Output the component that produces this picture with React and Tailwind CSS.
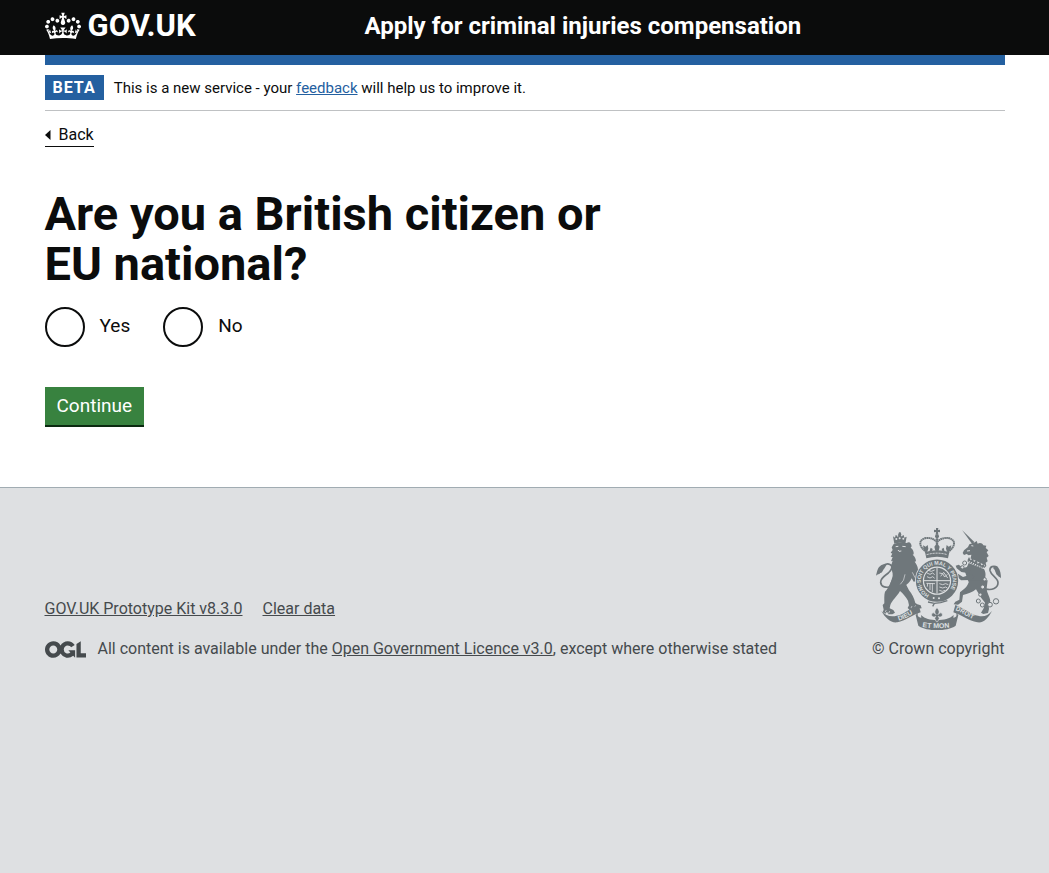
import React from "react";

function Crown() {
  return (
    <svg aria-hidden="true" viewBox="0 0 132 97" className="h-8 w-9" fill="currentColor">
      <path
        fillRule="evenodd"
        d="M25 30.2c3.5 1.5 7.7-.2 9.1-3.7 1.5-3.6-.2-7.8-3.9-9.2-3.6-1.4-7.6.3-9.1 3.9-1.4 3.5.3 7.5 3.9 9zM9 39.5c3.6 1.5 7.8-.2 9.2-3.7 1.5-3.6-.2-7.8-3.9-9.1-3.6-1.5-7.6.2-9.1 3.8-1.4 3.5.3 7.5 3.8 9zM4.4 57.2c3.5 1.5 7.7-.2 9.1-3.8 1.5-3.6-.2-7.7-3.9-9.1-3.5-1.5-7.6.3-9.1 3.8-1.4 3.5.3 7.6 3.9 9.1zm38.3-21.4c3.5 1.5 7.7-.2 9.1-3.8 1.5-3.6-.2-7.7-3.9-9.1-3.6-1.5-7.6.3-9.1 3.8-1.3 3.6.4 7.7 3.9 9.1zm64.4-5.6c-3.6 1.5-7.8-.2-9.1-3.7-1.5-3.6.2-7.8 3.8-9.2 3.6-1.4 7.7.3 9.2 3.9 1.3 3.5-.4 7.5-3.9 9zm15.9 9.3c-3.6 1.5-7.7-.2-9.1-3.7-1.5-3.6.2-7.8 3.7-9.1 3.6-1.5 7.7.2 9.2 3.8 1.5 3.5-.3 7.5-3.8 9zm4.7 17.7c-3.6 1.5-7.8-.2-9.2-3.8-1.5-3.6.2-7.7 3.9-9.1 3.6-1.5 7.7.3 9.2 3.8 1.3 3.5-.4 7.6-3.9 9.1zM89.3 35.8c-3.6 1.5-7.8-.2-9.2-3.8-1.4-3.6.2-7.7 3.9-9.1 3.6-1.5 7.7.3 9.2 3.8 1.4 3.6-.3 7.7-3.9 9.1zM69.7 17.7l8.9 4.7V9.3l-8.9 2.8c-.2-.3-.5-.6-.9-.9L72.4 0H59.6l3.5 11.2c-.3.3-.6.5-.9.9l-8.8-2.8v13.1l8.8-4.7c.3.3.6.7.9.9l-5 15.4v.1c-.2.8-.4 1.6-.4 2.4 0 4.1 3.1 7.5 7 8.1h.2c.3 0 .7.1 1 .1.4 0 .7 0 1-.1h.2c4-.6 7.1-4.1 7.1-8.1 0-.8-.1-1.7-.4-2.4V34l-5.1-15.4c.4-.2.7-.6 1-.9zM66 92.8c16.9 0 32.8 1.1 47.1 3.2 4-16.9 8.9-26.7 14-33.5l-9.6-3.4c1 4.9 1.1 7.2 0 10.2-1.5-1.4-3-4.3-4.2-8.7L108.6 76c2.8-2 5-3.2 7.5-3.3-4.4 9.4-10 11.9-13.6 11.2-4.3-.8-6.3-4.6-5.6-7.9 1-4.7 5.7-5.9 8-.5 4.3-8.7-3-11.4-7.6-8.8 7.1-7.2 7.9-13.5 2.1-21.1-8 6.1-8.1 12.3-4.5 20.8-4.7-5.4-12.1-2.5-9.5 6.2 3.4-5.2 7.9-2 7.2 3.1-.6 4.3-6.4 7.8-13.5 7.2-10.3-.9-10.9-8-11.2-13.8 2.5-.5 7.1 1.8 11 7.3L80.2 60c-4.1 4.4-8 5.3-12.3 5.4 1.4-4.4 8-11.6 8-11.6H55.5s6.4 7.2 7.9 11.6c-4.2-.1-8-1-12.3-5.4l1.4 16.4c3.9-5.5 8.5-7.7 10.9-7.3-.3 5.8-.9 12.8-11.1 13.8-7.2.6-12.9-2.9-13.5-7.2-.7-5 3.8-8.3 7.1-3.1 2.7-8.7-4.6-11.6-9.4-6.2 3.7-8.5 3.6-14.7-4.6-20.8-5.8 7.6-5 13.9 2.2 21.1-4.7-2.6-11.9.1-7.7 8.8 2.3-5.5 7.1-4.2 8.1.5.7 3.3-1.3 7.1-5.7 7.9-3.5.7-9-1.8-13.5-11.2 2.5.1 4.7 1.3 7.5 3.3l-4.7-15.4c-1.2 4.4-2.7 7.2-4.3 8.7-1.1-3-.9-5.3 0-10.2l-9.5 3.4c5 6.9 9.9 16.7 14 33.5 14.8-2.1 30.8-3.2 47.7-3.2z"
      />
    </svg>
  );
}

function OglLogo() {
  return (
    <svg aria-hidden="true" viewBox="0 0 483.2 195.7" className="h-[17px] w-[41px] shrink-0" fill="currentColor">
      <path d="M421.5 142.8V.1l-50.7 32.3v161.1h112.4v-50.7zm-122.3-9.6A47.12 47.12 0 0 1 221 97.8c0-26 21.1-47.1 47.1-47.1 16.7 0 31.4 8.7 39.7 21.8l42.7-27.2A97.63 97.63 0 0 0 268.1 0c-36.5 0-68.3 20.1-85.1 49.7A98 98 0 0 0 97.8 0C43.9 0 0 43.9 0 97.8s43.9 97.8 97.8 97.8c36.5 0 68.3-20.1 85.1-49.7a97.76 97.76 0 0 0 149.6 25.4l19.4 22.2h3v-87.8h-80l24.3 27.5zM97.8 145c-26 0-47.1-21.1-47.1-47.1s21.1-47.1 47.1-47.1 47.1 21.1 47.1 47.1S123.8 145 97.8 145" />
    </svg>
  );
}

const INK = "#6f777b";
const PAPER = "#dee0e2";

function CoatOfArms() {
  return (
    <svg aria-hidden="true" viewBox="51 39 375 306" className="h-[102px] w-[125px]" fill={INK}>
      {/* lion: tail */}
      <path d="M98 214c-16 6-32 2-33-12-1-13 12-19 23-28 10-9 15-20 6-25-8-4-17-1-22 6" fill="none" stroke={INK} strokeWidth="5" />
      <path d="M51 182c3-10 4-22 12-28 6-6 14-7 20-5-4 5-5 10-10 15-3 6-4 9-9 10-4 5-8 3-13 8z" />
      {/* lion: crown, head, mane and trunk */}
      <path d="M106 86l-4-22 6 4 2-8 6 3 4-11h5l3 11 6-3 2 8 7-3-4 21c-11-4-22-4-33 0z" />
      <g fill={PAPER}>
        <circle cx="112" cy="72" r="3" />
        <circle cx="122" cy="70" r="3" />
        <circle cx="133" cy="71" r="3" />
        <circle cx="116" cy="63" r="2" />
        <circle cx="128" cy="62" r="2" />
      </g>
      <path d="M104 87q18-7 39-3c9-6 14 2 15 10l-3 4c7 5 10 12 9 20l-3 1c7 6 10 13 10 20l-4 1c6 8 10 16 10 24l6-5 4 8-5 5 6 4-7 5-1 9 4 6-8 1-12 3-6-10c-5 12-14 20-26 25l-26 10-14-10c2-12 6-21 9-32 2-11-6-21-5-30l5-16-5 2 5-13-6-1 5-9-5-3 6-8-3-8z" />
      {/* lion: legs */}
      <path d="M103 188c-10 14-13 30-25 42-3 10-2 22-2 35l-5 5 3 14-3 8 8 4 5-6 4 8 12 0 8-5-5-8-11-5 2-10c5-14 19-24 29-42 9 8 18 18 24 29l3 14-4 8 6 6 10-6 10 3 16-2-3-9-10-3-6-4c-4-15-10-28-19-38l-10-20z" />
      <g stroke={PAPER} strokeWidth="3" fill="none">
        <path d="M110 95l8-1M130 94l10 1M117 105l3 4 7-1" />
        <path d="M138 178q-2 20-14 30M160 172l8 16" strokeWidth="2" />
        <path d="M78 292l4-7M89 295l3-7M156 279l3-6M167 277l3-6" strokeWidth="2" />
      </g>

      {/* unicorn: tail */}
      <path d="M381 222c17 5 36-3 36-19 0-15-21-21-24-36-2-12 11-17 22-10" fill="none" stroke={INK} strokeWidth="5" />
      <path d="M426 190c-3-5-6-3-9-8-5-3-6-8-8-12-1-5-4-8-7-11 3-7 10-7 15-2 7 8 9 21 9 33z" />
      {/* unicorn: horn, head and neck */}
      <path d="M309 45l37 36-6 7z" />
      <path d="M345 83l8-5 3 8c8-4 14-1 17 5l9 1-2 7 8 7-5 6 6 11-6 5 3 11-6 4 2 10-6 6-44-25c4-6 4-10 5-15l-8 2-6-4-8 3-4-6 4-8 12-10 4-8z" />
      {/* unicorn: trunk */}
      <path d="M329 144l46 18c8 14 4 26 0 38l-6 18-34-4-9-20-8-24z" />
      {/* unicorn: forelegs */}
      <path d="M338 152l-25 7-14-10-9 3 3 8 14 11 24 4M338 178l-26 8-13-8-10-6-5 6 9 6 13 12 28-1 14-8z" />
      {/* unicorn: hind legs */}
      <path d="M332 196c-5 10-7 20-16 25l-13 11-2 22-12 6-5 8 13 1 12-9 3-20c14-4 29-7 39-17l11 18c4 9 10 14 16 22l-4 17-8 13 7 4 14-3 3-12-1-12 5-12c-2-15-11-24-11-38l3-24z" />
      <path d="M329 135l46 21" stroke={PAPER} strokeWidth="13" />
      <path d="M326 134l4-8 5 10 7-6 3 11 8-6 3 11 8-5 3 10 8-4 0 8-5 6-44-21z" />
      <path d="M329 139l41 19" stroke={PAPER} strokeWidth="3" strokeDasharray="4 3" />
      <g stroke={PAPER} strokeWidth="3" fill="none">
        <path d="M337 92l6 1M324 108l9-1" />
      </g>
      <g fill={PAPER} stroke={INK} strokeWidth="3">
        <circle cx="317" cy="144" r="6" />
        <circle cx="310" cy="157" r="5" />
        <circle cx="377" cy="193" r="5" />
        <circle cx="371" cy="216" r="6" />
        <circle cx="364" cy="239" r="5" />
        <circle cx="358" cy="258" r="6" />
        <circle cx="370" cy="270" r="6" />
        <circle cx="393" cy="269" r="7" />
        <circle cx="411" cy="259" r="8" />
      </g>

      {/* crown */}
      <path d="M231 39h7l-1 6 6-1v8l-6-1 1 8h-8l1-8-6 1v-8l6 1z" />
      <circle cx="234" cy="64" r="6" />
      <path
        d="M203 112C180 96 177 76 198 70c16-4 28 3 36 11 8-8 21-15 37-11 21 6 18 26-5 42"
        fill="none" stroke={INK} strokeWidth="6" strokeDasharray="5 1"
      />
      <path d="M234 70v42" stroke={INK} strokeWidth="7" strokeDasharray="5 1" />
      <path d="M192 91l8 4 6-5 2 11-3 9-10-3zM277 91l-8 4-6-5-2 11 3 9 10-3zM234 85l8 10-3 12h-10l-3-12zM215 98l6 4-3 8h-7zM254 98l-6 4 3 8h6z" />
      <path d="M198 111q36-11 73 0l-4 19q-33-9-65 0z" />
      <path d="M203 119q31-9 62 0" fill="none" stroke={PAPER} strokeWidth="3" strokeDasharray="6 3" />

      {/* shield and garter */}
      <circle cx="234" cy="197" r="66" fill={PAPER} />
      <circle cx="234" cy="197" r="53" fill="none" stroke={INK} strokeWidth="21" />
      <path id="garter" d="M211 240A48 48 0 1 1 259 238" fill="none" />
      <text fontFamily="Liberation Sans, sans-serif" fontWeight="700" fontSize="16" fill={PAPER}>
        <textPath href="#garter">HONI·SOIT QUI MAL Y PENSE</textPath>
      </text>
      <circle cx="234" cy="197" r="39" fill={INK} />
      <g stroke={PAPER} strokeWidth="3" fill="none">
        <path d="M234 158v78M195 197h78" />
        <path
          d="M204 174l9 4 8-4 6 5M204 185l9 4 8-4 6 5M207 166l10 3 10-4M241 174l10 2 6 10 8-8M245 184l9-12 12 17M202 205l26 1M206 205l-1 10M213 205v20M220 205v26M241 206l10 3 9-3 8 3M241 216l10 3 9-3 5 3M241 226l9 3 8-3"
          strokeWidth="2.500"
        />
      </g>
      <g fill={PAPER}>
        <circle cx="224" cy="249" r="3" />
        <circle cx="240" cy="250" r="3" />
      </g>
      <path d="M207 261l19 4 19-2 20-6M226 265l-5 9" fill="none" stroke={INK} strokeWidth="4" />

      {/* motto ribbon */}
      <path d="M67 288c12 14 30 19 46 14 20-2 38-22 66-32l6 22c-26 8-46 26-70 30-20 3-36-14-48-34z" />
      <path d="M399 288c-12 14-26 19-42 14-20-2-40-22-68-32l-6 22c26 8 46 26 72 30 20 3 33-14 44-34z" />
      <path d="M179 292c-6 6-3 16 8 16l-1-8c12 12 28 15 48 15s38-3 50-15l-1 8c11 0 12-10 6-16l9 8-8 32c-14 10-34 13-56 13s-42-3-56-13l-8-32z" />
      <path d="M234 278c8 8 8 15 3 21 6-9 15-6 13 2-1 5-8 7-12 3l3 6-5 10h-4l-5-10 3-6c-4 4-11 2-12-3-2-8 7-11 13-2-5-6-5-13 3-21z" stroke={PAPER} strokeWidth="2" />
      <path id="mottoLeft" d="M119 317c20-4 38-20 62-29" fill="none" />
      <path id="mottoMid" d="M190 336q43 7 94 0" fill="none" />
      <path id="mottoRight" d="M289 285c20 7 39 25 68 32" fill="none" />
      <g fontFamily="Liberation Sans, sans-serif" fontWeight="700" fill={PAPER}>
        <text fontSize="20"><textPath href="#mottoLeft">DIEU</textPath></text>
        <text fontSize="21"><textPath href="#mottoMid">ET MON</textPath></text>
        <text fontSize="19"><textPath href="#mottoRight">DROIT</textPath></text>
      </g>
    </svg>
  );
}

function Radio({ value, label }) {
  return (
    <div className="flex items-center">
      <input
        type="radio"
        id={value}
        name="citizen"
        value={value}
        className="size-10 appearance-none rounded-full border-2 border-[#0b0c0c] checked:border-[12px]"
      />
      <label htmlFor={value} className="px-[15px] pb-0.5 text-[19px] leading-6">
        {label}
      </label>
    </div>
  );
}

const wrap = "mx-auto w-full max-w-[1020px] px-[30px]";

export default function App() {
  return (
    <div className="flex min-h-screen flex-col bg-white font-['Roboto','Noto_Sans',sans-serif] text-base text-[#0b0c0c]">
      <header className="bg-[#0b0c0c] text-white">
        <div className={wrap}>
          <div className="flex h-[55px] items-center pb-1">
            <div className="w-1/3">
              <a href="#" className="flex w-fit items-center gap-[7px] text-[31px] leading-8 font-bold">
                <Crown />
                <span>GOV.UK</span>
              </a>
            </div>
            <a href="#" className="text-2xl leading-6 font-bold">
              Apply for criminal injuries compensation
            </a>
          </div>
        </div>
      </header>

      <div className={wrap}>
        <div className="h-[10px] bg-[#2460a0]" />
        <div className="flex items-center gap-[10px] border-b border-[#bfc1c3] py-[10px]">
          <strong className="bg-[#2460a0] px-2 text-base leading-[25px] font-bold tracking-[1px] text-white">BETA</strong>
          <span className="text-[15px] leading-5">
            This is a new service - your{" "}
            <a href="#" className="text-[#2460a0] underline">feedback</a> will help us to improve it.
          </span>
        </div>
        <a href="#" className="mt-[14px] inline-flex items-center gap-2 border-b border-[#0b0c0c] pb-px leading-5">
          <svg aria-hidden="true" viewBox="0 0 6 10" className="h-[10px] w-[6px]" fill="currentColor">
            <path d="M0 5L5.500 0v10z" />
          </svg>
          Back
        </a>

        <main className="pt-[42px] pb-[62px]">
          <form className="w-2/3 pr-[30px]" onSubmit={(e) => e.preventDefault()}>
            <fieldset>
              <legend>
                <h1 className="text-[47px] leading-[50px] font-bold">
                  Are you a British citizen or EU national?
                </h1>
              </legend>
              <div className="mt-[18px] flex gap-[18px]">
                <Radio value="yes" label="Yes" />
                <Radio value="no" label="No" />
              </div>
            </fieldset>
            <button
              type="submit"
              className="mt-10 bg-[#38823f] px-3 text-[19px] leading-[38px] text-white shadow-[0_2px_0_#0b2a10]"
            >
              Continue
            </button>
          </form>
        </main>
      </div>

      <footer className="grow border-t border-[#a1acb2] bg-[#dee0e2] pt-10 text-[#454a4d]">
        <div className={wrap}>
          <div className="flex items-end justify-between gap-5">
            <div>
              <ul className="flex gap-5 leading-5">
                <li><a href="#" className="underline">GOV.UK Prototype Kit v8.3.0</a></li>
                <li><a href="#" className="underline">Clear data</a></li>
              </ul>
              <div className="mt-5 flex items-center gap-3">
                <OglLogo />
                <span className="leading-5">
                  All content is available under the{" "}
                  <a href="#" className="underline">Open Government Licence v3.0</a>, except where otherwise stated
                </span>
              </div>
            </div>
            <a href="#" className="flex shrink-0 flex-col items-center gap-[9px] leading-5">
              <CoatOfArms />
              © Crown copyright
            </a>
          </div>
        </div>
      </footer>
    </div>
  );
}
